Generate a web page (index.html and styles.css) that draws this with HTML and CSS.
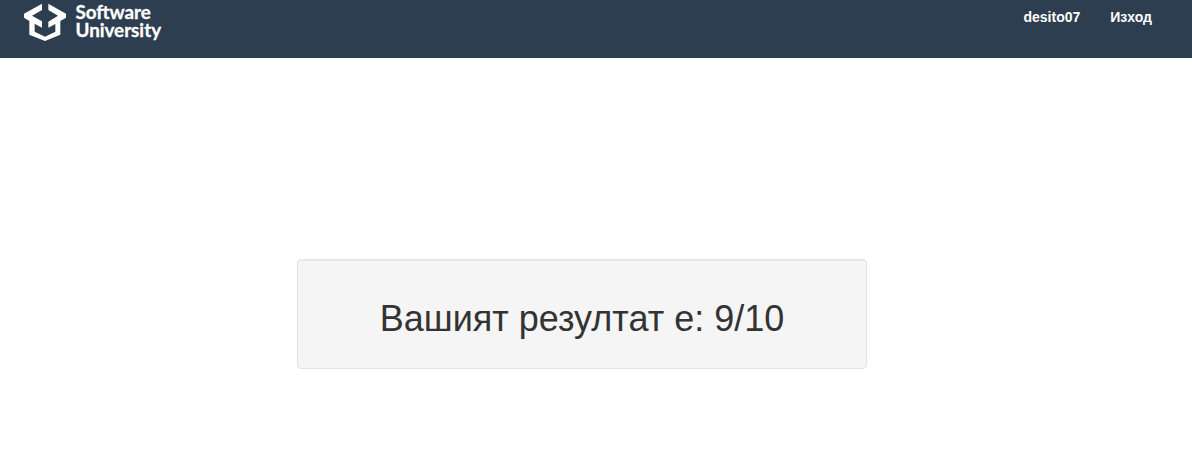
FILE: index.html
```html
<!DOCTYPE html>
<html lang="bg">
<head>
<meta charset="utf-8">
<title>Software University</title>
<link rel="stylesheet" href="styles.css">
</head>
<body>
<header class="navbar">
  <a class="brand">
    <svg class="brand-mark" width="42" height="38" viewBox="0 0 126 114" aria-hidden="true">
      <path fill="#fff" d="M54 2V21L24 38L54 55V74L32 62V86L63 101L94 86V63L73 74V56L102 38L73 21V2L126 32V44L109 54V95L63 114L16 95V54L0 44V32Z"/>
    </svg>
    <span class="brand-name"><span>Software</span><span>University</span></span>
  </a>
  <nav class="menu">
    <a>desito07</a>
    <a>Изход</a>
  </nav>
</header>
<main class="content">
  <section class="well">
    <h1>Вашият резултат е: 9/10</h1>
  </section>
</main>
</body>
</html>
```
FILE: styles.css
```css
* {
  box-sizing: border-box;
}

body {
  margin: 0;
  background: #fff;
  color: #333;
  font-family: "Liberation Sans", Arial, sans-serif;
}

.navbar {
  display: flex;
  justify-content: space-between;
  align-items: flex-start;
  height: 58px;
  padding: 0 40px 0 24px;
  background: #2e3e51;
  color: #fff;
}

.brand {
  display: flex;
  gap: 9.5px;
  padding-top: 3px;
}

.brand-mark {
  display: block;
}

.brand-name {
  display: flex;
  flex-direction: column;
  font: bold 18.8px/18px Lato, sans-serif;
  -webkit-text-stroke: 0.3px #fff;
}

.menu {
  display: flex;
  gap: 30px;
  padding-top: 8px;
  font-size: 14px;
  font-weight: bold;
  line-height: 18px;
}

.content {
  padding: 201px 28px 0 0;
}

.well {
  width: 570px;
  height: 110px;
  margin: 0 auto;
  padding: 19px;
  border: 1px solid #e3e3e3;
  border-radius: 4px;
  background: #f5f5f5;
  box-shadow: inset 0 1px 1px rgba(0, 0, 0, 0.05);
}

.well h1 {
  margin: 20px 0 10px;
  font-size: 36px;
  font-weight: 500;
  line-height: 1.1;
  text-align: center;
}
```
